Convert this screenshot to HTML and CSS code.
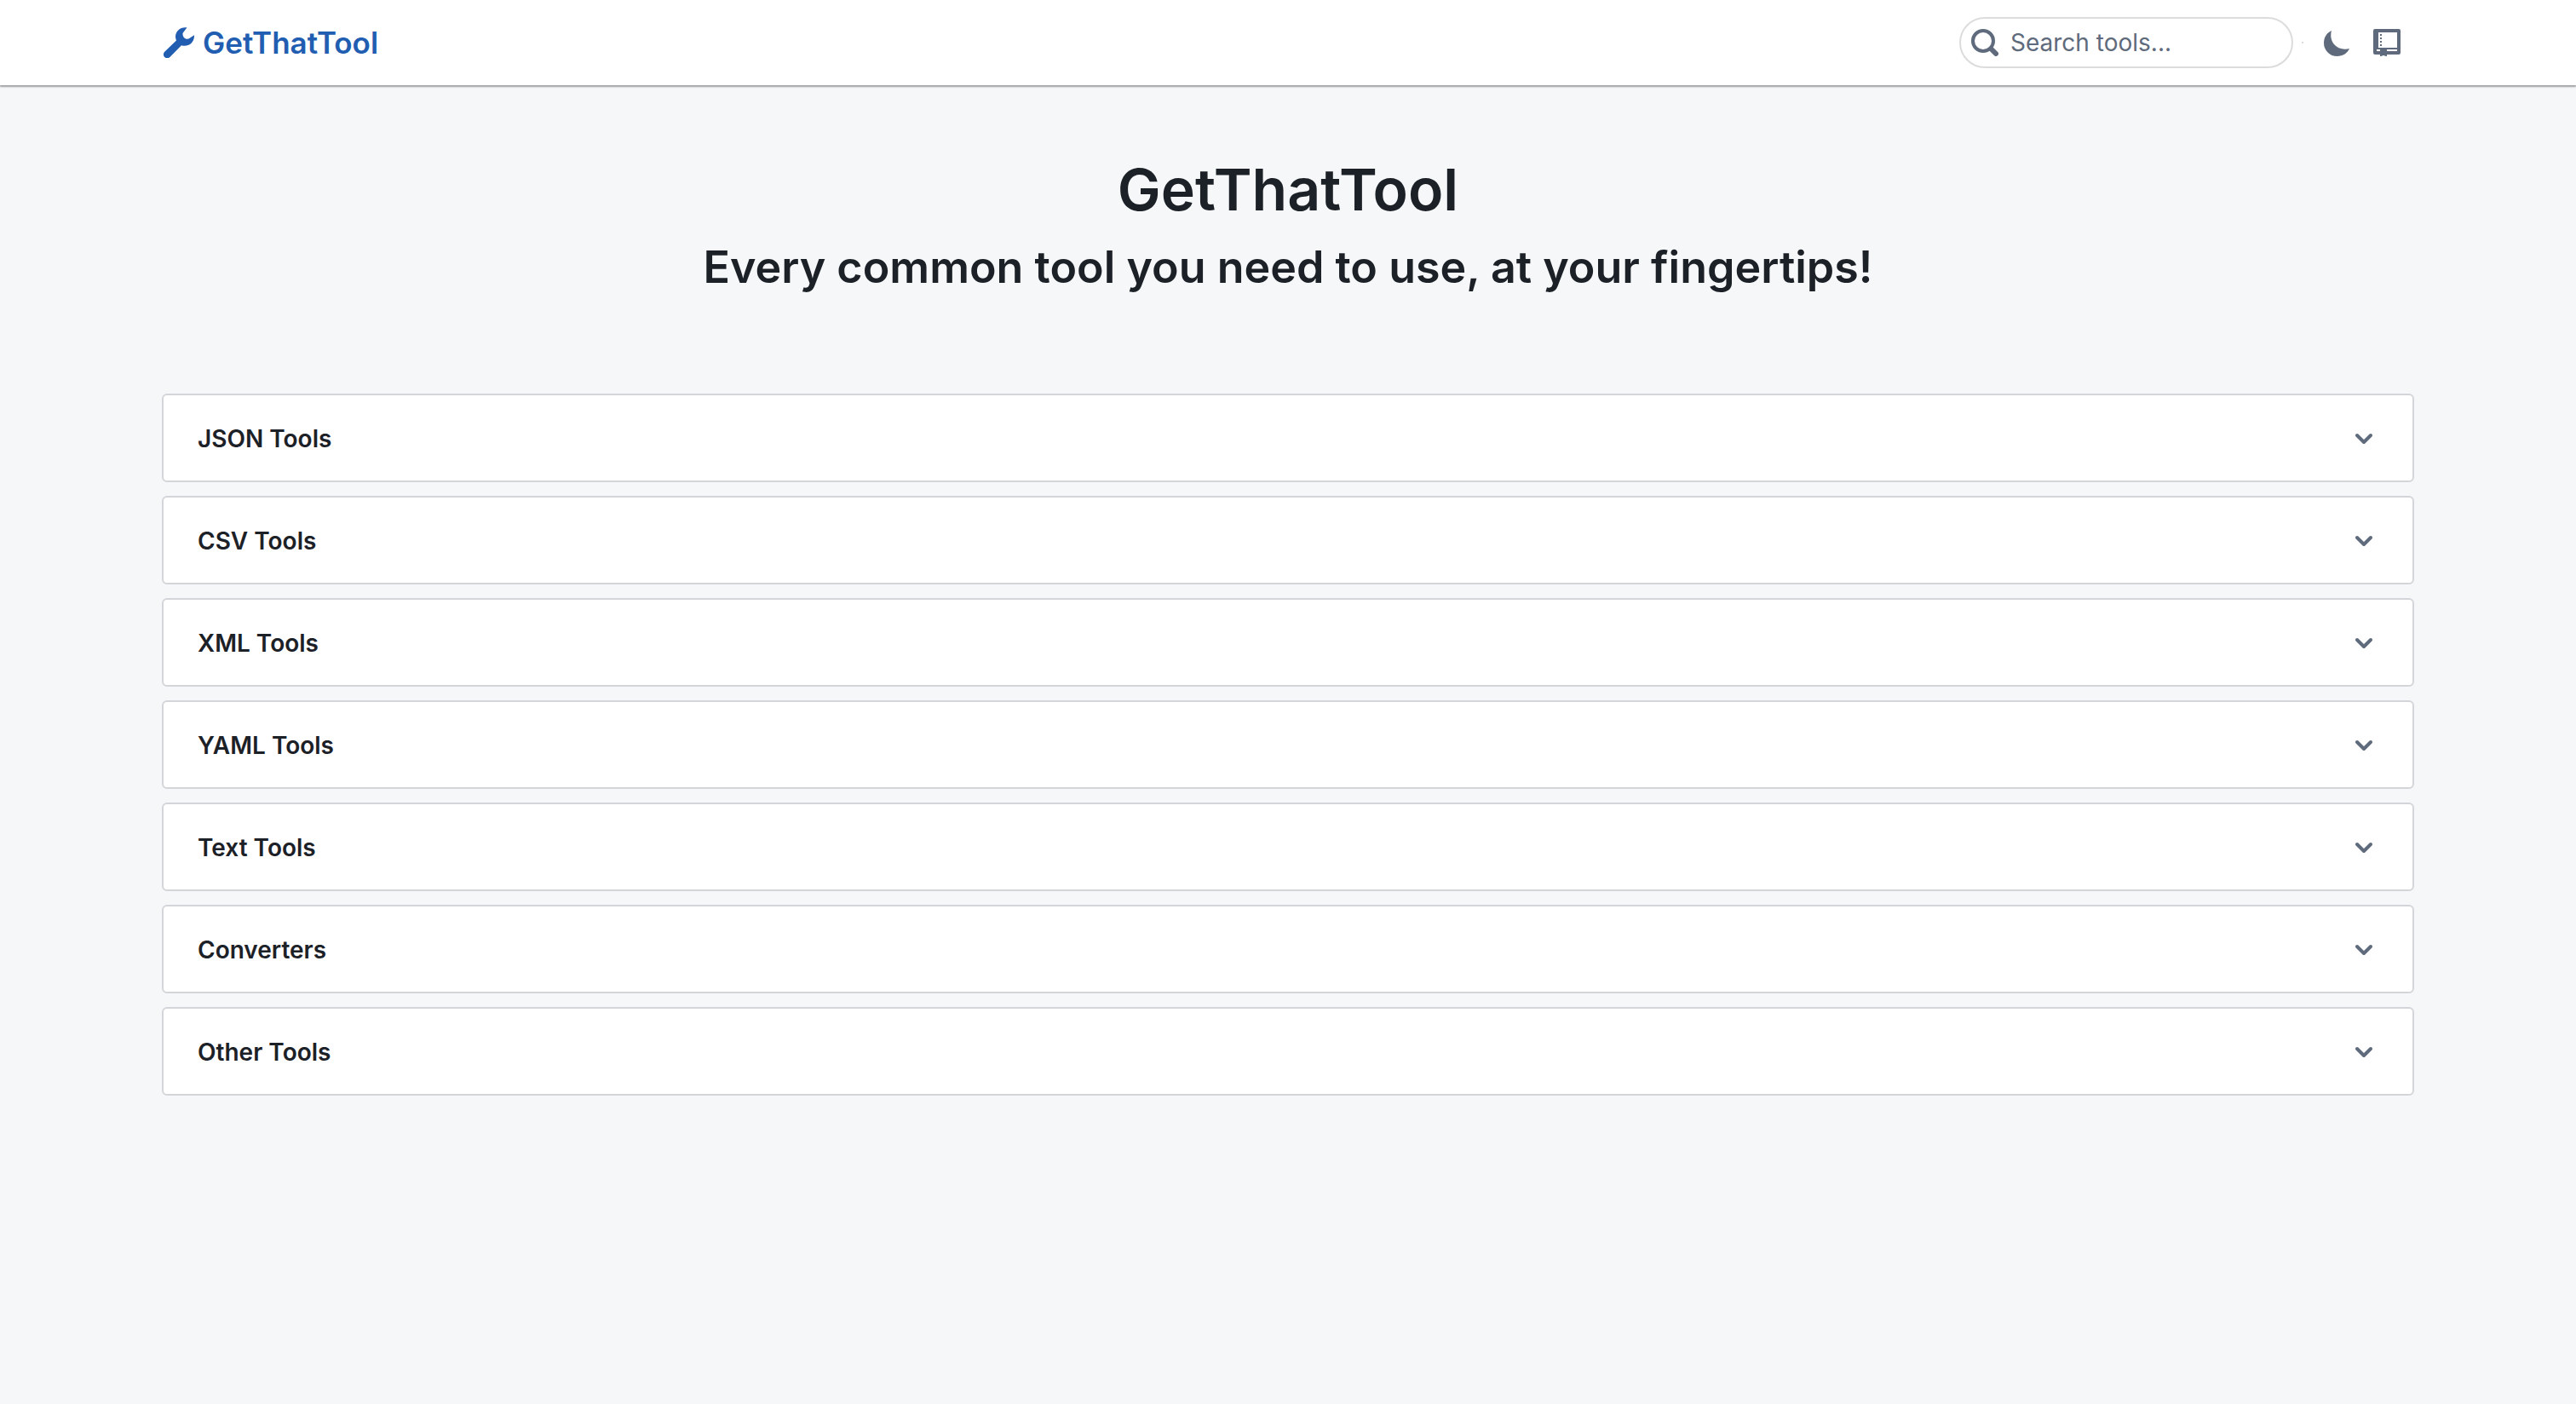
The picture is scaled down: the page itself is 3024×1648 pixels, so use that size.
FILE: index.html
```html
<!DOCTYPE html>
<html lang="en">
<head>
<meta charset="utf-8">
<meta name="viewport" content="width=device-width, initial-scale=1">
<title>GetThatTool</title>
<link rel="stylesheet" href="styles.css">
</head>
<body>
<header class="topbar">
  <a class="brand" href="#">
    <svg class="brand-icon" viewBox="0 0 36 36" aria-hidden="true"><path d="M27.500 0.300C20 -0.800 14 4.500 14 11q0 2.500 1 4.500L1.500 28.500a4.400 4.400 0 1 0 6.200 6.200L21 21.200c7 2.300 15.500-2 15-12L29.500 13.600c-4 .800-7.300-2-7-6.500z"/></svg>
    <span>GetThatTool</span>
  </a>
  <div class="actions">
    <label class="search">
      <svg class="search-icon" viewBox="0 0 32 32" aria-hidden="true"><circle cx="14" cy="14" r="12"/><path class="handle" d="M23.500 23.500l5.500 5.500"/></svg>
      <input class="search-input" type="search" placeholder="Search tools..." aria-label="Search tools">
    </label>
    <span class="divider"></span>
    <button class="icon-button" type="button" aria-label="Dark mode">
      <svg class="icon" viewBox="0 0 32 32" aria-hidden="true"><path d="M9 2C4 4 0 9.500 0 16.500a15.500 15.500 0 0 0 15.500 15.500c7 0 12.500-4 14.500-9C18 26.500 5 17 9 2z"/></svg>
    </button>
    <button class="icon-button" type="button" aria-label="Manual">
      <svg class="icon" viewBox="0 0 32 32" aria-hidden="true"><path fill-rule="evenodd" d="M2 0h28a2 2 0 0 1 2 2v26a2 2 0 0 1-2 2H16v2h-1l-3-1-3 1h-1v-2H2a2 2 0 0 1-2-2V2a2 2 0 0 1 2-2zM6 4v18h22V4zM4 24v2h4v-2zM16 24v2h12v-2z"/><path d="M8 6h2v2H8zM8 10h2v2H8zM8 14h2v2H8zM8 18h2v2H8z"/></svg>
    </button>
  </div>
</header>
<main class="page">
  <div class="hero">
    <h1 class="title">GetThatTool</h1>
    <h2 class="subtitle">Every common tool you need to use, at your fingertips!</h2>
  </div>
  <div class="categories">
    <button class="category" type="button" aria-expanded="false">JSON Tools<svg class="chevron" viewBox="0 0 22 14" aria-hidden="true"><path d="M3 3l8 8 8-8"/></svg></button>
    <button class="category" type="button" aria-expanded="false">CSV Tools<svg class="chevron" viewBox="0 0 22 14" aria-hidden="true"><path d="M3 3l8 8 8-8"/></svg></button>
    <button class="category" type="button" aria-expanded="false">XML Tools<svg class="chevron" viewBox="0 0 22 14" aria-hidden="true"><path d="M3 3l8 8 8-8"/></svg></button>
    <button class="category" type="button" aria-expanded="false">YAML Tools<svg class="chevron" viewBox="0 0 22 14" aria-hidden="true"><path d="M3 3l8 8 8-8"/></svg></button>
    <button class="category" type="button" aria-expanded="false">Text Tools<svg class="chevron" viewBox="0 0 22 14" aria-hidden="true"><path d="M3 3l8 8 8-8"/></svg></button>
    <button class="category" type="button" aria-expanded="false">Converters<svg class="chevron" viewBox="0 0 22 14" aria-hidden="true"><path d="M3 3l8 8 8-8"/></svg></button>
    <button class="category" type="button" aria-expanded="false">Other Tools<svg class="chevron" viewBox="0 0 22 14" aria-hidden="true"><path d="M3 3l8 8 8-8"/></svg></button>
  </div>
</main>
</body>
</html>
```
FILE: styles.css
```css
* {
  box-sizing: border-box;
}

body {
  margin: 0;
  background: #f6f7f9;
  color: #1c2127;
  font-family: Inter, "Liberation Sans", sans-serif;
  font-size: 28px;
}

.topbar {
  display: flex;
  align-items: center;
  justify-content: space-between;
  height: 100px;
  padding: 0 190px;
  background: #fff;
  box-shadow: 0 0 0 2px rgba(17, 20, 24, 0.1), 0 2px 2px rgba(17, 20, 24, 0.3);
}

.brand {
  display: flex;
  align-items: center;
  gap: 10px;
  color: #215db0;
  font-size: 35px;
  font-weight: 600;
  text-decoration: none;
}

.brand-icon {
  width: 36px;
  height: 36px;
  margin-left: 2px;
  fill: currentColor;
}

.actions {
  display: flex;
  align-items: center;
  padding-right: 3px;
}

.search {
  display: flex;
  align-items: center;
  gap: 14px;
  width: 392px;
  height: 60px;
  padding: 0 12px;
  border: 2px solid #dcdcdd;
  border-radius: 30px;
  background: #fff;
  color: #5f6b7c;
}

.search-icon {
  flex: none;
  width: 32px;
  height: 32px;
  fill: none;
  stroke: currentColor;
  stroke-width: 4;
  stroke-linecap: round;
}

.handle {
  stroke-width: 6;
}

.search-input {
  flex: 1;
  min-width: 0;
  padding: 0;
  border: 0;
  outline: 0;
  background: none;
  color: inherit;
  font: inherit;
}

.search-input::placeholder {
  color: inherit;
  opacity: 1;
}

.divider {
  width: 2px;
  height: 2px;
  margin: 0 11px 0 10px;
  background: #dcdcdd;
}

.icon-button {
  display: flex;
  align-items: center;
  justify-content: center;
  width: 58px;
  height: 60px;
  padding: 0;
  border: 0;
  background: none;
  color: #5f6b7c;
}

.icon {
  width: 32px;
  height: 32px;
  fill: currentColor;
}

.page {
  padding: 80px 190px;
}

.hero {
  margin-bottom: 112px;
  text-align: center;
}

.title,
.subtitle {
  margin: 0;
  font-weight: 600;
}

.title {
  font-size: 68px;
  line-height: 84px;
}

.subtitle {
  margin-top: 14px;
  font-size: 52px;
  line-height: 72px;
}

.categories {
  display: grid;
  gap: 16px;
}

.category {
  display: flex;
  align-items: center;
  justify-content: space-between;
  height: 104px;
  padding: 1px 46px 0 40px;
  border: 2px solid #d3d5d9;
  border-radius: 6px;
  background: #fff;
  color: inherit;
  font: inherit;
  font-weight: 600;
}

.chevron {
  width: 22px;
  height: 14px;
  fill: none;
  stroke: #5f6b7c;
  stroke-width: 4;
  stroke-linecap: round;
  stroke-linejoin: round;
}
```
